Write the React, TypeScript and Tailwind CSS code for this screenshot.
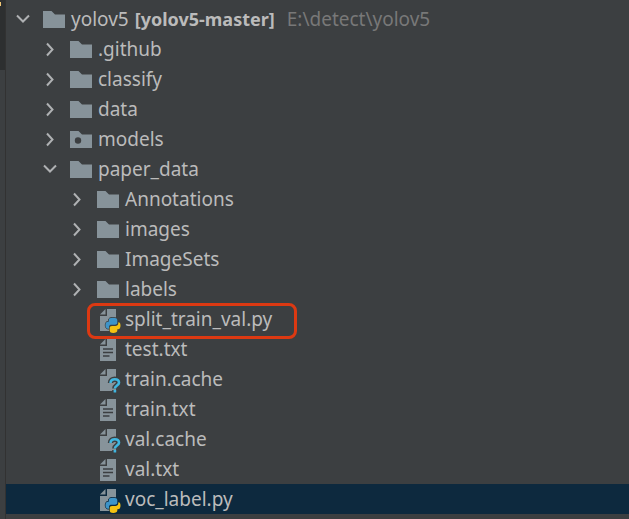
import { useState } from "react";
import { clsx } from "clsx";

type FileKind = "folder" | "package" | "python" | "text" | "unknown";

type TreeNode = {
  name: string;
  kind: FileKind;
  module?: string;
  path?: string;
  open?: boolean;
  marked?: boolean;
  children?: TreeNode[];
};

const PROJECT: TreeNode = {
  name: "yolov5",
  kind: "folder",
  module: "[yolov5-master]",
  path: "E:\\detect\\yolov5",
  open: true,
  children: [
    { name: ".github", kind: "folder", children: [] },
    { name: "classify", kind: "folder", children: [] },
    { name: "data", kind: "folder", children: [] },
    { name: "models", kind: "package", children: [] },
    {
      name: "paper_data",
      kind: "folder",
      open: true,
      children: [
        { name: "Annotations", kind: "folder", children: [] },
        { name: "images", kind: "folder", children: [] },
        { name: "ImageSets", kind: "folder", children: [] },
        { name: "labels", kind: "folder", children: [] },
        { name: "split_train_val.py", kind: "python", marked: true },
        { name: "test.txt", kind: "text" },
        { name: "train.cache", kind: "unknown" },
        { name: "train.txt", kind: "text" },
        { name: "val.cache", kind: "unknown" },
        { name: "val.txt", kind: "text" },
        { name: "voc_label.py", kind: "python" },
      ],
    },
  ],
};

const INDENT = ["pl-[9px]", "pl-[36px]", "pl-[63px]"];

function Chevron({ open }: { open: boolean }) {
  return (
    <svg width="16" height="16" viewBox="0 0 16 16" fill="none" stroke="#afb1b3" strokeWidth="2">
      {open ? <path d="M2 4.5 8 10.5 14 4.5" /> : <path d="M5 2.5 10.5 8.5 5 14.5" />}
    </svg>
  );
}

function FileIcon({ kind, active }: { kind: FileKind; active: boolean }) {
  // badges are cut out of the sheet with the row's own background
  const back = active ? "#0d293e" : "#3c3f41";

  if (kind === "folder" || kind === "package") {
    return (
      <svg width="24" height="28" viewBox="0 0 24 28" className="shrink-0">
        <path d="M1 6H9.5L13 9.5H23V23H1Z" fill="#87939a" />
        {kind === "package" && <circle cx="9" cy="15.5" r="3.2" fill={back} />}
      </svg>
    );
  }

  return (
    <svg width="24" height="28" viewBox="0 0 24 28" className="shrink-0 overflow-visible">
      <path d="M11 4H20V26H4V11H11Z" fill="#87939a" />
      <path d="M9.5 4V9.5H4Z" fill="#87939a" />
      {kind === "text" && (
        <path d="M7 14H17M7 17.5H17M7 21H13.5" stroke={back} strokeWidth="1.5" />
      )}
      {kind === "unknown" && (
        <g fill="none">
          <path
            d="M14.5 18C14.5 15.4 16.4 14.2 18.8 14.2S23 15.4 23 17.8C23 20.4 18.9 20.6 18.9 23.4M18.9 25V27.6"
            stroke={back}
            strokeWidth="5.5"
          />
          <path
            d="M14.5 18C14.5 15.4 16.4 14.2 18.8 14.2S23 15.4 23 17.8C23 20.4 18.9 20.6 18.9 23.4M18.9 25V27.6"
            stroke="#40b6e0"
            strokeWidth="2.6"
          />
        </g>
      )}
      {kind === "python" && (
        <g>
          <path
            d="M17 12.5C14 12.5 12.5 13.3 12.5 15V16.5H12C10 16.5 9.3 18 9.3 20.2S10.5 24 12 24H13.5C13.5 26.5 14 27.8 17.2 27.8C20 27.8 21.5 27 21.5 25V24C23.5 24 24.5 22.5 24.5 20.2S23.5 16.8 21.7 16.8V15C21.7 13.3 19.5 12.5 17 12.5Z"
            fill={back}
            stroke={back}
            strokeWidth="1"
          />
          <path
            d="M17 12.7C14 12.7 12.8 13.5 12.8 15V16.7H12C10.2 16.7 9.5 18 9.5 20.2S10.4 23.8 12 23.8H13V22C13 20.3 14 19.7 15.5 19.7H19C20.5 19.7 21.3 18.8 21.3 17.5V15C21.3 13.5 19.7 12.7 17 12.7Z"
            fill="#3e94c8"
          />
          <path
            d="M17.2 28C20 28 21.3 27.2 21.3 25.6V24.2H22C23.8 24.2 24.5 22.7 24.5 20.5S23.8 17.2 22.3 17.2V18.3C22.3 20.2 21 21 19.5 21H16C14.5 21 13.7 21.8 13.7 23V25.5C13.7 27.2 15 28 17.2 28Z"
            fill="#f5c211"
          />
        </g>
      )}
    </svg>
  );
}

type RowProps = {
  node: TreeNode;
  depth: number;
  selected: string;
  onSelect: (name: string) => void;
};

function TreeRow({ node, depth, selected, onSelect }: RowProps) {
  const [open, setOpen] = useState(Boolean(node.open));
  const active = selected === node.name;

  return (
    <li>
      <div
        className={clsx("relative flex h-[30px] items-center", INDENT[depth], active && "bg-[#0d293e]")}
        onClick={() => onSelect(node.name)}
      >
        {node.children ? (
          <button
            type="button"
            aria-label={`Toggle ${node.name}`}
            aria-expanded={open}
            className="mr-[11px] size-4 shrink-0"
            onClick={() => setOpen(!open)}
          >
            <Chevron open={open} />
          </button>
        ) : (
          <span className="mr-[11px] size-4 shrink-0" />
        )}
        <FileIcon kind={node.kind} active={active} />
        <span className="ml-[5px] whitespace-nowrap">{node.name}</span>
        {node.module && <b className="ml-1.5 whitespace-nowrap text-[18px]">{node.module}</b>}
        {node.path && <span className="ml-3 whitespace-nowrap text-[#787878]">{node.path}</span>}
        {node.marked && (
          <span className="pointer-events-none absolute -top-px left-[81px] h-9 w-[210px] rounded-lg border-3 border-[#dc3912]" />
        )}
      </div>
      {open && node.children && node.children.length > 0 && (
        <ul>
          {node.children.map((child) => (
            <TreeRow key={child.name} node={child} depth={depth + 1} selected={selected} onSelect={onSelect} />
          ))}
        </ul>
      )}
    </li>
  );
}

export default function App() {
  const [selected, setSelected] = useState("voc_label.py");

  return (
    <div className="flex min-h-screen bg-[#3c3f41] font-['Noto_Sans','Open_Sans',sans-serif] text-[19px] leading-[30px] text-[#bbbbbb]">
      {/* Tool window stripe */}
      <div className="w-[6px] shrink-0 border-r border-[#323232]">
        <div className="h-[70px] bg-[#2d2f30] pt-0.5">
          <div className="h-1 w-px bg-[#f0c674]" />
        </div>
      </div>

      <ul className="min-w-0 flex-1 pt-1">
        <TreeRow node={PROJECT} depth={0} selected={selected} onSelect={setSelected} />
      </ul>
    </div>
  );
}
